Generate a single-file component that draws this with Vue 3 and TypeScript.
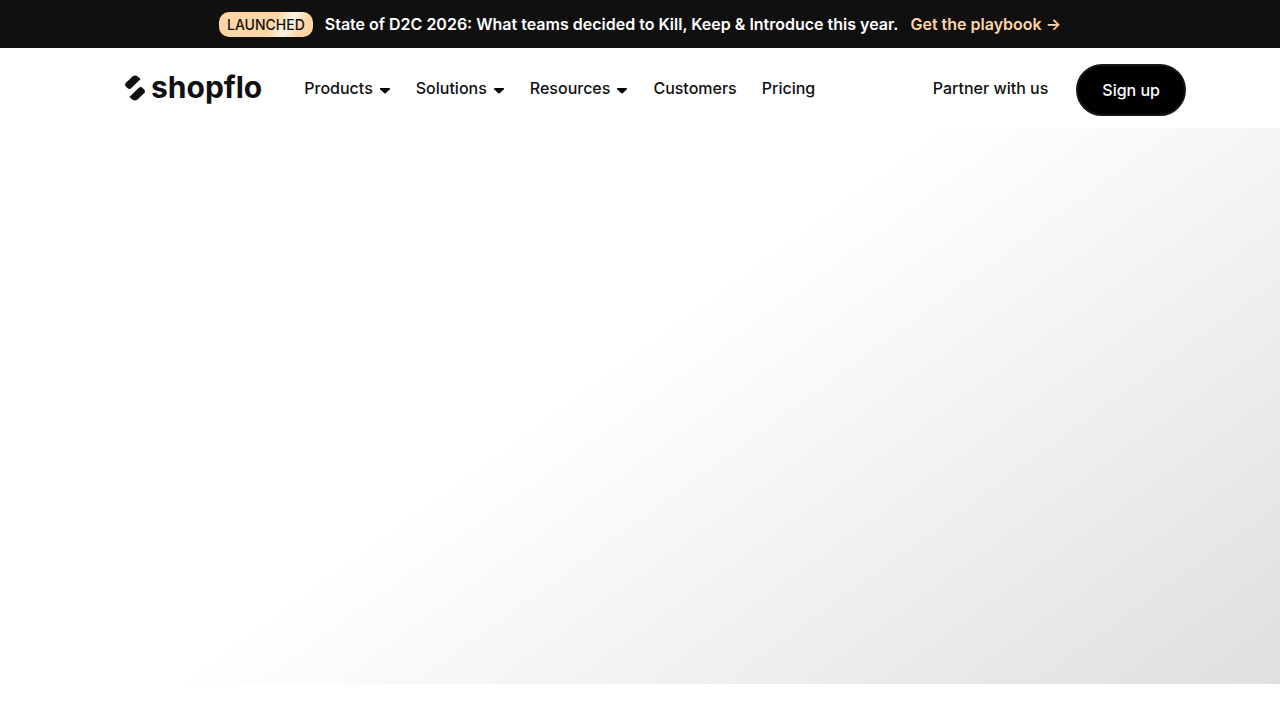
<script setup lang="ts">
interface MenuItem {
  label: string
  hasMenu: boolean
}

const menu: MenuItem[] = [
  { label: 'Products', hasMenu: true },
  { label: 'Solutions', hasMenu: true },
  { label: 'Resources', hasMenu: true },
  { label: 'Customers', hasMenu: false },
  { label: 'Pricing', hasMenu: false },
]
</script>

<template>
  <div class="page">
    <aside class="banner">
      <span class="badge">LAUNCHED</span>
      <span class="message">State of D2C 2026: What teams decided to Kill, Keep &amp; Introduce this year.</span>
      <a class="playbook" href="#playbook">Get the playbook →</a>
    </aside>

    <header class="header">
      <a class="logo" href="#home">
        <svg class="mark" viewBox="0 0 20 26" aria-hidden="true">
          <path d="M7.500 1.600Q10-.3 12.400 1.300L15.600 4 6.400 13Q4.600 14.700 2.600 13.200L.9 11.600Q-.9 9.600.9 7.700Z" />
          <path d="M12.500 24.400Q10 26.300 7.600 24.700L4.400 22 13.600 13Q15.400 11.300 17.400 12.800L19.100 14.400Q20.900 16.400 19.100 18.300Z" />
        </svg>
        <span class="wordmark">shopflo</span>
      </a>
      <nav class="nav" aria-label="Main">
        <template v-for="item in menu" :key="item.label">
          <button v-if="item.hasMenu" class="nav-item" type="button" aria-haspopup="true">
            {{ item.label }}
            <svg class="caret" viewBox="0 0 12 6" aria-hidden="true">
              <path d="M1.500 0H10.500Q11.600.2 10.800 1.200L7 5.100Q6 6 5 5.100L1.200 1.200Q.4.2 1.500 0Z" />
            </svg>
          </button>
          <a v-else class="nav-item" href="#">{{ item.label }}</a>
        </template>
      </nav>
      <a class="partner" href="#partner">Partner with us</a>
      <button class="signup" type="button">Sign up</button>
    </header>

    <main class="hero"></main>
  </div>
</template>

<style>
body {
  margin: 0;
  background: #fff;
}
</style>

<style scoped>
.page {
  display: flex;
  flex-direction: column;
  min-height: 100vh;
  box-sizing: border-box;
  padding-bottom: 36px;
  font-family: Inter, "Liberation Sans", sans-serif;
  font-size: 16px;
  line-height: 24px;
  color: #101010;
}

a {
  color: inherit;
  text-decoration: none;
}

button {
  font: inherit;
  color: inherit;
  cursor: pointer;
}

.banner {
  display: flex;
  align-items: center;
  justify-content: center;
  gap: 12px;
  min-height: 48px;
  background: #101010;
  color: #fff;
  font-weight: 600;
}

.badge {
  padding: 0 8px;
  border-radius: 10px;
  background: linear-gradient(120deg, #ffd5a5 56%, #fff3e5 70%, #fff3e5 72%, #ffd5a5 84%);
  color: #101010;
  font-size: 14px;
  font-weight: 500;
  line-height: 25px;
}

.banner .playbook {
  color: #ffd5a5;
}

.header {
  display: flex;
  align-items: center;
  min-height: 80px;
  box-sizing: border-box;
  padding: 0 94px 0 125px;
  background: #fff;
  font-weight: 500;
}

.logo {
  display: flex;
  align-items: center;
  gap: 6px;
}

.mark {
  width: 20px;
  height: 26px;
  fill: #101010;
}

.wordmark {
  font-size: 30px;
  font-weight: 700;
  line-height: 36px;
  padding-bottom: 2px;
}

.nav {
  display: flex;
  align-items: center;
  gap: 25px;
  margin-left: 42px;
}

.nav-item {
  display: flex;
  align-items: center;
  gap: 6px;
  padding: 0;
  border: 0;
  background: none;
}

.caret {
  width: 12px;
  height: 6px;
  margin-top: 6px;
}

.partner {
  margin-left: auto;
}

.signup {
  margin: 4px 0 0 28px;
  padding: 12px 24px;
  border: 2px solid #171717;
  border-radius: 26px;
  background: #000;
  color: #fff;
}

.hero {
  flex: 1;
  background: linear-gradient(144deg, #fff 46%, #dfdfdf 100%);
}
</style>
